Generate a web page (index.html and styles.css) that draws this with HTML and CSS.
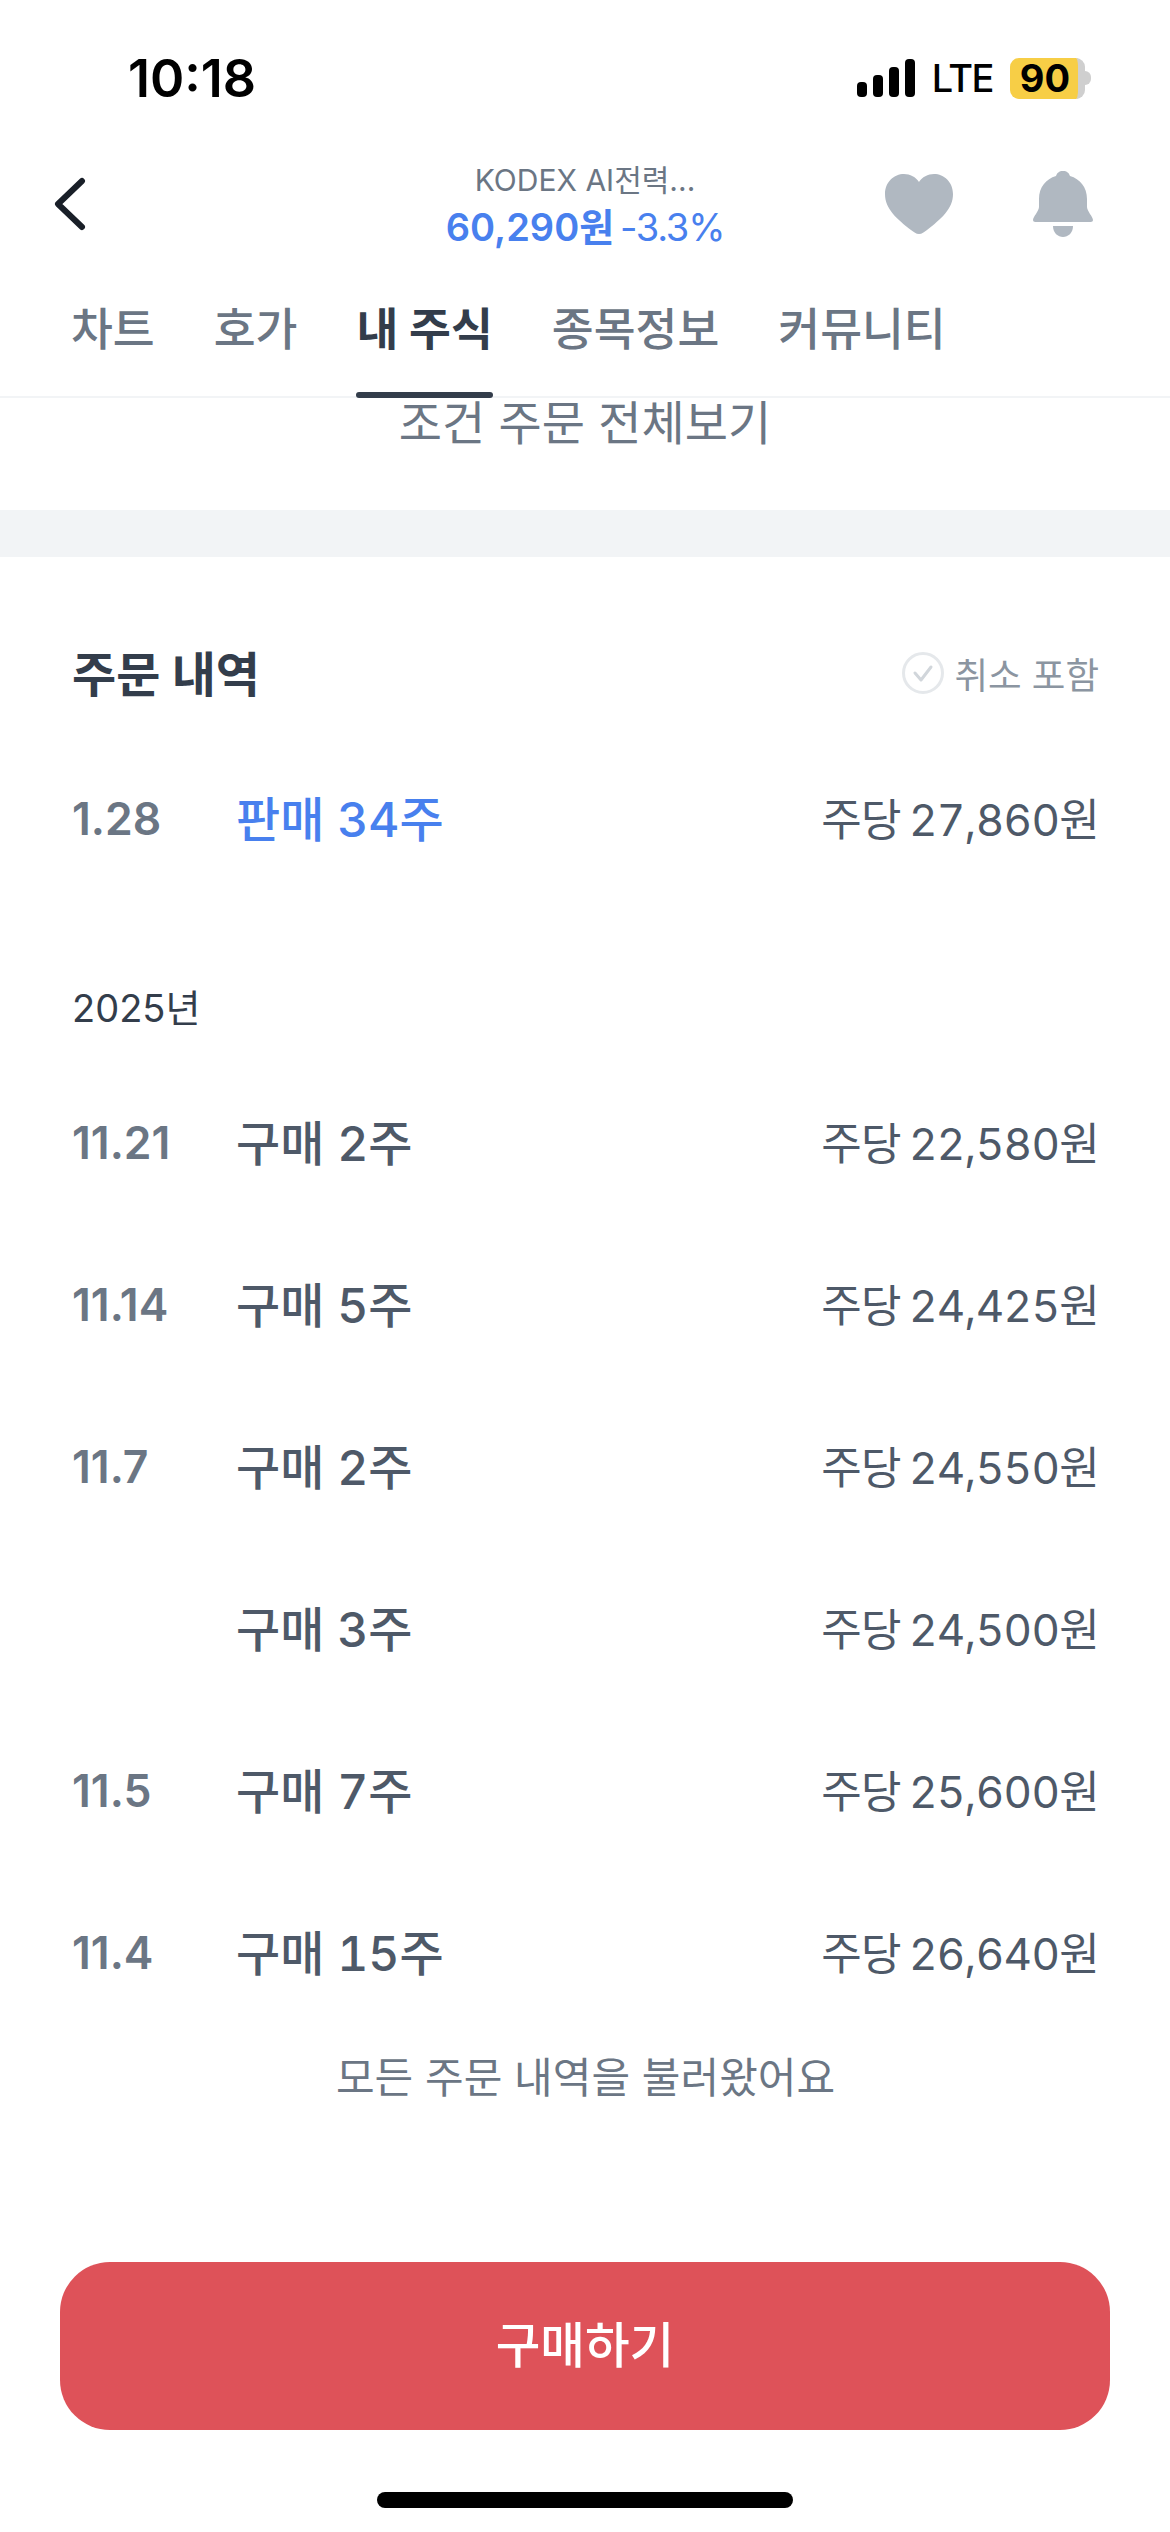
FILE: index.html
```html
<!DOCTYPE html>
<html lang="ko">
  <head>
    <meta charset="UTF-8" />
    <meta name="viewport" content="width=device-width, initial-scale=1.0" />
    <title>내 주식</title>
    <link rel="stylesheet" href="styles.css">
  </head>
  <body>
    <div class="status-bar">
      <span class="time">10:18</span>
      <div class="status-icons">
        <svg class="signal" width="58" height="38" viewBox="0 0 58 38">
          <rect x="0" y="23" width="10" height="15" rx="4" />
          <rect x="16" y="16" width="10" height="22" rx="4" />
          <rect x="32" y="8" width="10" height="30" rx="4" />
          <rect x="48" y="0" width="10" height="38" rx="4" />
        </svg>
        <span class="lte">LTE</span>
        <div class="battery">
          <div class="battery-body"><span>90</span></div>
          <div class="battery-nub"></div>
        </div>
      </div>
    </div>

    <div class="nav">
      <svg class="back" width="34" height="54" viewBox="0 0 34 54">
        <path d="M29 4 L5 27 L29 50" fill="none" stroke="#191f28" stroke-width="6" stroke-linecap="round" stroke-linejoin="round" />
      </svg>
      <div class="nav-title">
        <div class="stock-name">KODEX AI전력...</div>
        <div class="stock-price"><b>60,290원</b> <span>-3.3%</span></div>
      </div>
      <div class="nav-actions">
        <svg width="68" height="60" viewBox="0 0 68 60">
          <path d="M34 60 C31 60 29 58 26 56 C12 45 0 35 0 20 C0 8 9 0 19 0 C25 0 31 3 34 8 C37 3 43 0 49 0 C59 0 68 8 68 20 C68 35 56 45 42 56 C39 58 37 60 34 60 Z" fill="#b0b8c1" />
        </svg>
        <svg width="60" height="66" viewBox="0 0 60 66">
          <path d="M30 0 C34 0 36 2 37 5 C47 8 54 16 54 28 L54 36 C54 40 60 46 60 49 C60 51 58 51 56 51 L4 51 C2 51 0 51 0 49 C0 46 6 40 6 36 L6 28 C6 16 13 8 23 5 C24 2 26 0 30 0 Z" fill="#b0b8c1" />
          <path d="M20 55 L40 55 C40 62 35 66 30 66 C25 66 20 62 20 55 Z" fill="#b0b8c1" />
        </svg>
      </div>
    </div>

    <div class="tabs">
      <div class="tab">차트</div>
      <div class="tab">호가</div>
      <div class="tab active">내 주식</div>
      <div class="tab">종목정보</div>
      <div class="tab">커뮤니티</div>
    </div>

    <div class="scrolled-link"><span>조건 주문 전체보기</span></div>
    <div class="band"></div>

    <div class="history">
      <div class="history-head">
        <h2>주문 내역</h2>
        <div class="cancel-toggle">
          <svg width="42" height="42" viewBox="0 0 42 42">
            <circle cx="21" cy="21" r="19.5" fill="none" stroke="#e5e8eb" stroke-width="3" />
            <path d="M13 21 L19 28 L29 15" fill="none" stroke="#d1d6db" stroke-width="3" stroke-linecap="round" stroke-linejoin="round" />
          </svg>
          <span>취소 포함</span>
        </div>
      </div>

      <div class="row">
        <span class="date">1.28</span>
        <span class="label sell">판매 34주</span>
        <span class="price">주당 27,860원</span>
      </div>

      <div class="year">2025년</div>

      <div class="row">
        <span class="date">11.21</span>
        <span class="label">구매 2주</span>
        <span class="price">주당 22,580원</span>
      </div>
      <div class="row">
        <span class="date">11.14</span>
        <span class="label">구매 5주</span>
        <span class="price">주당 24,425원</span>
      </div>
      <div class="row">
        <span class="date">11.7</span>
        <span class="label">구매 2주</span>
        <span class="price">주당 24,550원</span>
      </div>
      <div class="row">
        <span class="date"></span>
        <span class="label">구매 3주</span>
        <span class="price">주당 24,500원</span>
      </div>
      <div class="row">
        <span class="date">11.5</span>
        <span class="label">구매 7주</span>
        <span class="price">주당 25,600원</span>
      </div>
      <div class="row">
        <span class="date">11.4</span>
        <span class="label">구매 15주</span>
        <span class="price">주당 26,640원</span>
      </div>

      <div class="all-loaded">모든 주문 내역을 불러왔어요</div>
    </div>

    <button class="buy-button">구매하기</button>
    <div class="home-indicator"></div>
  </body>
</html>
```

FILE: styles.css
```css
body {
  font-family: Inter, "Noto Sans CJK KR", sans-serif;
  margin: 0;
  padding: 0;
  width: 1170px;
  height: 2532px;
  overflow: hidden;
  background-color: #fff;
  color: #4e5968;
}
.status-bar {
  height: 156px;
  display: flex;
  align-items: center;
  justify-content: space-between;
  padding: 0 79px 0 128px;
}
.time {
  font-size: 52px;
  font-weight: 600;
  color: #000;
}
.status-icons {
  display: flex;
  align-items: center;
}
.signal {
  fill: #000;
}
.lte {
  font-size: 38px;
  font-weight: 500;
  color: #000;
  letter-spacing: -1.5px;
  margin: 0 17px;
}
.battery {
  display: flex;
  align-items: center;
}
.battery-body {
  width: 75px;
  height: 41px;
  box-sizing: border-box;
  border-right: 7px solid #cfcfcf;
  border-radius: 9px;
  background-color: #f7ce46;
  display: flex;
  align-items: center;
  justify-content: center;
  font-size: 38px;
  font-weight: 700;
  color: #000;
  padding-left: 2px;
}
.battery-nub {
  width: 6px;
  height: 14px;
  background-color: #cfcfcf;
  border-radius: 0 7px 7px 0;
}
.nav {
  height: 96px;
  display: flex;
  align-items: center;
  justify-content: space-between;
  padding: 0 77px 0 53px;
  position: relative;
}
.nav-title {
  position: absolute;
  left: 0;
  right: 0;
  text-align: center;
}
.stock-name {
  font-size: 30px;
  line-height: 46px;
  color: #6b7684;
}
.stock-price {
  font-size: 38px;
  line-height: 48px;
  color: #4880ee;
  word-spacing: -5px;
}
.stock-price b {
  font-weight: 600;
}
.stock-price span {
  letter-spacing: -1.2px;
}
.nav-actions {
  display: flex;
  align-items: center;
  gap: 80px;
}
.tabs {
  height: 146px;
  box-sizing: border-box;
  display: flex;
  align-items: flex-start;
  gap: 59px;
  padding: 48px 0 0 71px;
  border-bottom: 2px solid #f2f4f6;
}
.tab {
  position: relative;
  font-size: 45.5px;
  line-height: 60px;
  font-weight: 500;
  color: #6b7684;
}
.tab.active {
  font-weight: 700;
  color: #333d4b;
}
.tab.active::after {
  content: "";
  position: absolute;
  left: 0;
  right: 0;
  top: 92px;
  height: 6px;
  border-radius: 3px;
  background-color: #333d4b;
}
.scrolled-link {
  height: 112px;
  overflow: hidden;
  text-align: center;
  font-size: 47px;
  line-height: 60px;
  color: #6b7684;
}
.scrolled-link span {
  display: block;
  margin-top: -5px;
}
.band {
  height: 47px;
  background-color: #f2f4f6;
}
.history {
  padding: 0 71px 0 72px;
}
.history-head {
  height: 60px;
  margin: 86px 0 34px;
  display: flex;
  align-items: center;
  justify-content: space-between;
}
.history-head h2 {
  margin: 0 0 5px;
  font-size: 48px;
  font-weight: 700;
  color: #333d4b;
}
.cancel-toggle {
  display: flex;
  align-items: center;
  gap: 10px;
  font-size: 36.5px;
  color: #8b95a1;
}
.row {
  height: 162px;
  display: flex;
  align-items: center;
}
.date {
  width: 164px;
  padding-top: 2px;
  font-size: 44.5px;
  font-weight: 600;
  color: #6b7684;
}
.label {
  flex: 1;
  padding-bottom: 5px;
  font-size: 48px;
  font-weight: 500;
  font-variant-numeric: tabular-nums;
  color: #4e5968;
}
.label.sell {
  color: #4880ee;
}
.price {
  padding-bottom: 2px;
  font-size: 44px;
  font-variant-numeric: tabular-nums;
  letter-spacing: -0.7px;
  word-spacing: -3px;
  color: #4e5968;
}
.year {
  height: 50px;
  line-height: 50px;
  margin: 84px 0 28px;
  font-size: 38px;
  color: #333d4b;
}
.all-loaded {
  height: 60px;
  line-height: 60px;
  margin-top: 15px;
  text-align: center;
  font-size: 42px;
  color: #6b7684;
}
.buy-button {
  display: block;
  width: 1050px;
  height: 168px;
  margin: 154px 0 0 60px;
  padding: 0 0 8px;
  border: none;
  border-radius: 50px;
  background-color: #de5259;
  color: #fff;
  font-family: inherit;
  font-size: 48.5px;
  font-weight: 500;
}
.home-indicator {
  width: 416px;
  height: 16px;
  margin: 62px auto 0;
  border-radius: 8px;
  background-color: #000;
}
```
